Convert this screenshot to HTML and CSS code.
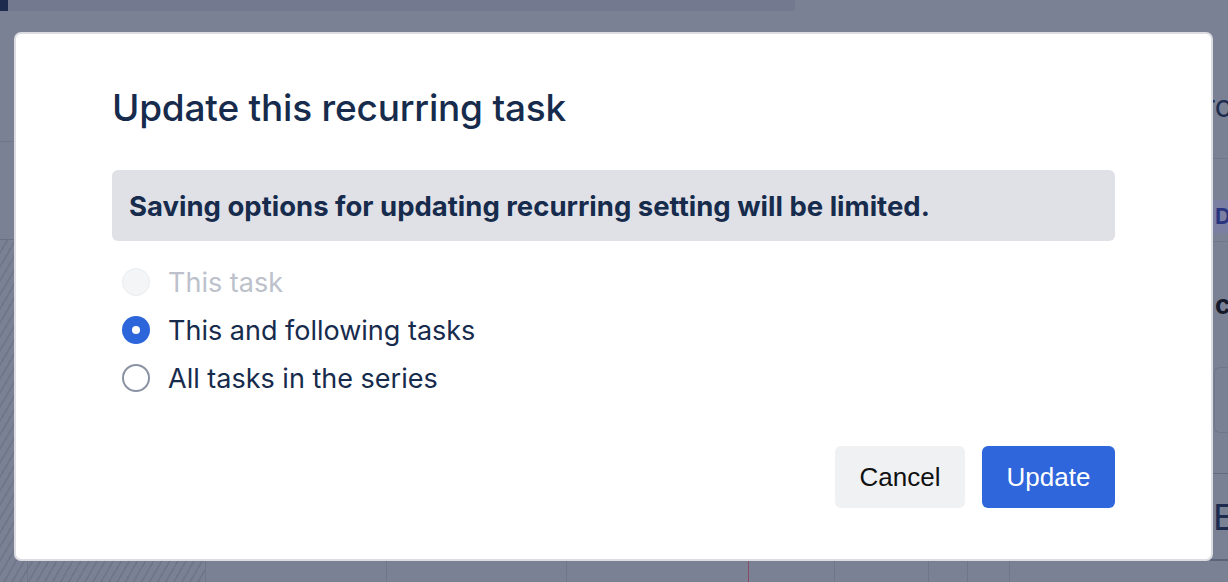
FILE: index.html
```html
<!DOCTYPE html>
<html lang="en">
<head>
<meta charset="utf-8">
<title>Update this recurring task</title>
<link rel="stylesheet" href="styles.css">
</head>
<body>
<div class="app">
  <div class="topbar">
    <div class="topbar-brand"></div>
    <div class="topbar-search"></div>
  </div>
  <div class="board">
    <div class="calendar">
      <div class="cal-head">
        <div class="cal-head-rail"></div>
      </div>
      <div class="cal-sub">
        <div class="cal-sub-rail"></div>
      </div>
      <div class="cal-body">
        <div class="col col-rail"></div>
        <div class="col col-hatch"></div>
        <div class="col w181"></div>
        <div class="col w180"></div>
        <div class="col w182"></div>
        <div class="col w86 today"></div>
        <div class="col w94"></div>
        <div class="col w39"></div>
        <div class="col w42"></div>
        <div class="col col-last"></div>
      </div>
    </div>
    <aside class="side">
      <div class="side-title">ro</div>
      <div class="side-tab">D</div>
      <div class="side-bold">c</div>
      <div class="side-box"></div>
      <div class="side-big">E</div>
    </aside>
  </div>
</div>

<div class="overlay">
  <div class="modal" role="dialog" aria-labelledby="modal-title">
    <h1 class="modal-title" id="modal-title">Update this recurring task</h1>
    <div class="notice">Saving options for updating recurring setting will be limited.</div>
    <div class="options">
      <label class="option is-disabled">
        <span class="radio radio-disabled"></span>
        <span class="option-label">This task</span>
      </label>
      <label class="option">
        <span class="radio radio-checked"></span>
        <span class="option-label">This and following tasks</span>
      </label>
      <label class="option">
        <span class="radio"></span>
        <span class="option-label">All tasks in the series</span>
      </label>
    </div>
    <div class="modal-footer">
      <button class="btn btn-subtle" type="button">Cancel</button>
      <button class="btn btn-primary" type="button">Update</button>
    </div>
  </div>
</div>
</body>
</html>
```

FILE: styles.css
```css
* { box-sizing: border-box; }

html, body {
  margin: 0;
  width: 1228px;
  height: 582px;
  overflow: hidden;
}

body {
  background: #7a8195;
  font-family: Inter, "Noto Sans", sans-serif;
}

/* ---------- dimmed app behind the modal ---------- */
.app {
  display: flex;
  flex-direction: column;
  height: 582px;
}

.topbar {
  display: flex;
  height: 11px;
  flex: none;
}
.topbar-brand {
  width: 8px;
  background: #1d2b4f;
}
.topbar-search {
  width: 787px;
  background: #737a8f;
  border-bottom-right-radius: 4px;
}

.board {
  flex: 1;
  display: flex;
  min-height: 0;
}

.calendar {
  width: 1210px;
  flex: none;
  display: flex;
  flex-direction: column;
}
.cal-head {
  height: 131px;
  flex: none;
}
.cal-head-rail {
  width: 40px;
  height: 100%;
  border-bottom: 1px solid #6f768a;
}
.cal-sub {
  height: 98px;
  flex: none;
}
.cal-sub-rail {
  width: 40px;
  height: 100%;
  border-bottom: 1px solid #687086;
}
.cal-body {
  flex: 1;
  display: flex;
}

.col {
  border-left: 1px solid #6f768a;
  flex: none;
}
.col-rail {
  width: 27px;
  border-left: none;
  background: repeating-linear-gradient(
    -60deg,
    #7a8195 0px,
    #7a8195 5px,
    #70778b 5px,
    #70778b 7px
  );
}
.col-hatch {
  width: 178px;
  background: repeating-linear-gradient(
    -60deg,
    #7a8195 0px,
    #7a8195 5px,
    #70778b 5px,
    #70778b 7px
  );
}
.w181 { width: 181px; }
.w180 { width: 180px; }
.w182 { width: 182px; }
.w86 { width: 86px; }
.w94 { width: 94px; }
.w39 { width: 39px; }
.w42 { width: 42px; }
.col-last { flex: 1; }
.today { border-left: 1px solid #8a4a63; }

.side {
  flex: 1;
  display: flex;
  flex-direction: column;
  overflow: hidden;
  white-space: nowrap;
}
.side-title {
  height: 148px;
  padding-top: 75px;
  font-size: 30px;
  line-height: 40px;
  color: #1d2b4f;
  border-bottom: 1px solid #70778c;
  text-indent: -6px;
  flex: none;
}
.side-tab {
  margin-top: 41px;
  height: 33px;
  background: #7b80a3;
  color: #2a3580;
  font-weight: 700;
  font-size: 22px;
  line-height: 33px;
  padding-left: 5px;
  flex: none;
}
.side-bold {
  margin-top: 8px;
  border-top: 1px solid #70778c;
  height: 124px;
  padding-top: 48px;
  font-weight: 700;
  font-size: 26px;
  line-height: 30px;
  color: #141a2a;
  padding-left: 5px;
  flex: none;
}
.side-box {
  margin-top: 2px;
  margin-left: 4px;
  height: 66px;
  border: 1px solid #6f768b;
  border-right: none;
  border-radius: 6px 0 0 6px;
  flex: none;
}
.side-big {
  margin-top: 40px;
  height: 88px;
  border-top: 1px solid #656c81;
  font-size: 36px;
  line-height: 86px;
  color: #1d2b4f;
  border-bottom: 2px solid #5d6479;
  padding-left: 3px;
  flex: none;
}

/* ---------- modal ---------- */
.overlay {
  position: fixed;
  inset: 0;
  padding: 32px 15px 21px 14px;
}

.modal {
  height: 529px;
  background: #fff;
  border: 2px solid #dcdde3;
  border-radius: 7px;
  padding: 52px 96px 51px 96px;
  display: flex;
  flex-direction: column;
  color: #172b4d;
}

.modal-title {
  margin: 0;
  font-size: 37px;
  line-height: 44px;
  font-weight: 500;
  letter-spacing: -0.2px;
  color: #172b4d;
}

.notice {
  margin-top: 40px;
  height: 71px;
  display: flex;
  align-items: center;
  padding-left: 17px;
  background: #dfe1e6;
  border-radius: 6px;
  font-size: 27.5px;
  font-weight: 700;
  color: #172b4d;
}

.options {
  margin-top: 17px;
  display: flex;
  flex-direction: column;
}

.option {
  height: 48px;
  display: flex;
  align-items: center;
  padding-left: 10px;
  gap: 18px;
  font-size: 27px;
  color: #172b4d;
}
.option.is-disabled { color: #bcc1cb; }

.radio {
  width: 28px;
  height: 28px;
  border-radius: 50%;
  border: 2px solid #8993a4;
  background: #fff;
  flex: none;
  display: flex;
  align-items: center;
  justify-content: center;
}
.radio-disabled {
  border: 1.5px solid #ebecf0;
  background: #f4f5f7;
}
.radio-checked {
  border: none;
  background: #2d66da;
}
.radio-checked::after {
  content: "";
  width: 8px;
  height: 8px;
  border-radius: 50%;
  background: #fff;
}

.modal-footer {
  margin-top: auto;
  display: flex;
  justify-content: flex-end;
  gap: 17px;
}

.btn {
  height: 62px;
  border: none;
  border-radius: 6px;
  padding: 0 24px;
  font-family: "Liberation Sans", Arial, sans-serif;
  font-size: 26px;
  cursor: pointer;
}
.btn-subtle {
  background: #f0f1f3;
  color: #111;
  width: 130px;
}
.btn-primary {
  background: #2f66db;
  color: #fff;
  width: 133px;
}
```
